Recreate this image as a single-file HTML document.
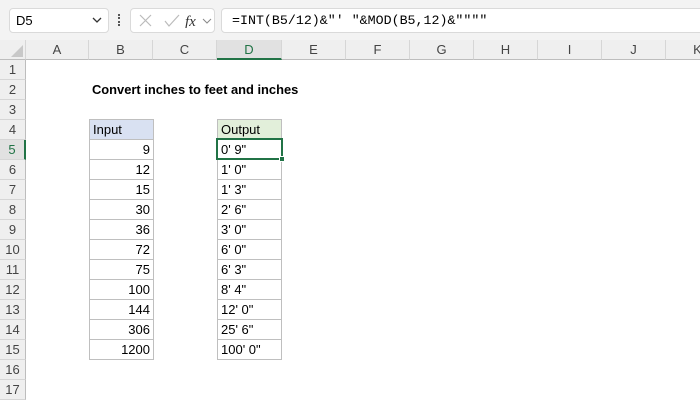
<!DOCTYPE html><html><head><style>
*{margin:0;padding:0;box-sizing:border-box}
body{width:700px;height:400px;overflow:hidden;background:#fff;font-family:"Liberation Sans",sans-serif;position:relative}
.a{position:absolute}
.top{left:0;top:0;width:700px;height:40px;background:#f3f3f3}
.box{background:#fff;border:1px solid #dadada;border-radius:4px}
.ch{top:40px;height:20px;background:#efefef;border-bottom:1px solid #bdbdbd;border-right:1px solid #d6d6d6;font-size:13px;color:#444;text-align:center;line-height:19px}
.rh{left:0;width:26px;height:20px;background:#efefef;border-bottom:1px solid #d6d6d6;border-right:1px solid #bdbdbd;font-size:13px;color:#444;text-align:center;line-height:20px}
.c{height:21px;width:65px;border:1px solid #bfbfbf;font-size:13px;line-height:19px;padding:0 3px;color:#000}
.r{text-align:right}
</style></head><body>
<div class="a top"></div>
<div class="a box" style="left:9px;top:8px;width:100px;height:25px;font-size:13px;line-height:23px;padding-left:6px">D5</div>
<svg class="a" style="left:92px;top:17px" width="10" height="7"><path d="M1 1L5 5L9 1" stroke="#333" stroke-width="1.3" fill="none"/></svg>
<div class="a" style="left:118px;top:14px;width:2px;height:12px;border-left:2px dotted #555"></div>
<div class="a box" style="left:130px;top:8px;width:85px;height:25px"></div>
<svg class="a" style="left:138px;top:14px" width="80" height="14"><path d="M2 1L13 12M13 1L2 12" stroke="#bbb" stroke-width="1.2"/><path d="M27 7L31 12L41 1" stroke="#bbb" stroke-width="1.2" fill="none"/><text x="47" y="12" font-family="Liberation Serif" font-style="italic" font-size="15" fill="#333">fx</text><path d="M65 5L69 9L73 5" stroke="#888" fill="none"/></svg>
<div class="a box" style="left:221px;top:8px;width:490px;height:25px;font-family:'Liberation Mono',monospace;font-size:13.3px;line-height:23px;padding-left:10px;color:#000">=INT(B5/12)&amp;"' "&amp;MOD(B5,12)&amp;""""</div>
<div class="a ch" style="left:0;width:26px;background:#efefef"></div>
<svg class="a" style="left:8px;top:44px" width="16" height="14"><path d="M15 1L15 13L3 13Z" fill="#c8c8c8"/></svg>
<div class="a ch" style="left:26px;width:63px">A</div>
<div class="a ch" style="left:89px;width:64px">B</div>
<div class="a ch" style="left:153px;width:64px">C</div>
<div class="a ch" style="left:217px;width:65px;background:#e1e1e1;border-bottom:2px solid #217346;color:#217346">D</div>
<div class="a ch" style="left:282px;width:64px">E</div>
<div class="a ch" style="left:346px;width:64px">F</div>
<div class="a ch" style="left:410px;width:64px">G</div>
<div class="a ch" style="left:474px;width:64px">H</div>
<div class="a ch" style="left:538px;width:64px">I</div>
<div class="a ch" style="left:602px;width:64px">J</div>
<div class="a ch" style="left:666px;width:64px">K</div>
<div class="a rh" style="top:60px">1</div><div class="a rh" style="top:80px">2</div><div class="a rh" style="top:100px">3</div><div class="a rh" style="top:120px">4</div>
<div class="a rh" style="top:140px;background:#e1e1e1;border-right:2px solid #217346;color:#217346">5</div>
<div class="a rh" style="top:160px">6</div><div class="a rh" style="top:180px">7</div><div class="a rh" style="top:200px">8</div><div class="a rh" style="top:220px">9</div><div class="a rh" style="top:240px">10</div><div class="a rh" style="top:260px">11</div><div class="a rh" style="top:280px">12</div><div class="a rh" style="top:300px">13</div><div class="a rh" style="top:320px">14</div><div class="a rh" style="top:340px">15</div><div class="a rh" style="top:360px">16</div><div class="a rh" style="top:380px">17</div>
<div class="a" style="left:92px;top:80px;font-size:12.9px;font-weight:bold;line-height:20px">Convert inches to feet and inches</div>
<div class="a c" style="left:89px;top:119px;background:#d9e1f2">Input</div>
<div class="a c" style="left:217px;top:119px;background:#e2efda">Output</div>
<div class="a c r" style="left:89px;top:139px">9</div><div class="a c" style="left:217px;top:139px">0' 9"</div>
<div class="a c r" style="left:89px;top:159px">12</div><div class="a c" style="left:217px;top:159px">1' 0"</div>
<div class="a c r" style="left:89px;top:179px">15</div><div class="a c" style="left:217px;top:179px">1' 3"</div>
<div class="a c r" style="left:89px;top:199px">30</div><div class="a c" style="left:217px;top:199px">2' 6"</div>
<div class="a c r" style="left:89px;top:219px">36</div><div class="a c" style="left:217px;top:219px">3' 0"</div>
<div class="a c r" style="left:89px;top:239px">72</div><div class="a c" style="left:217px;top:239px">6' 0"</div>
<div class="a c r" style="left:89px;top:259px">75</div><div class="a c" style="left:217px;top:259px">6' 3"</div>
<div class="a c r" style="left:89px;top:279px">100</div><div class="a c" style="left:217px;top:279px">8' 4"</div>
<div class="a c r" style="left:89px;top:299px">144</div><div class="a c" style="left:217px;top:299px">12' 0"</div>
<div class="a c r" style="left:89px;top:319px">306</div><div class="a c" style="left:217px;top:319px">25' 6"</div>
<div class="a c r" style="left:89px;top:339px">1200</div><div class="a c" style="left:217px;top:339px">100' 0"</div>
<div class="a" style="left:216px;top:138px;width:67px;height:22px;border:2px solid #217346"></div>
<div class="a" style="left:279px;top:156px;width:6px;height:6px;background:#217346;border:1px solid #fff"></div>
</body></html>
